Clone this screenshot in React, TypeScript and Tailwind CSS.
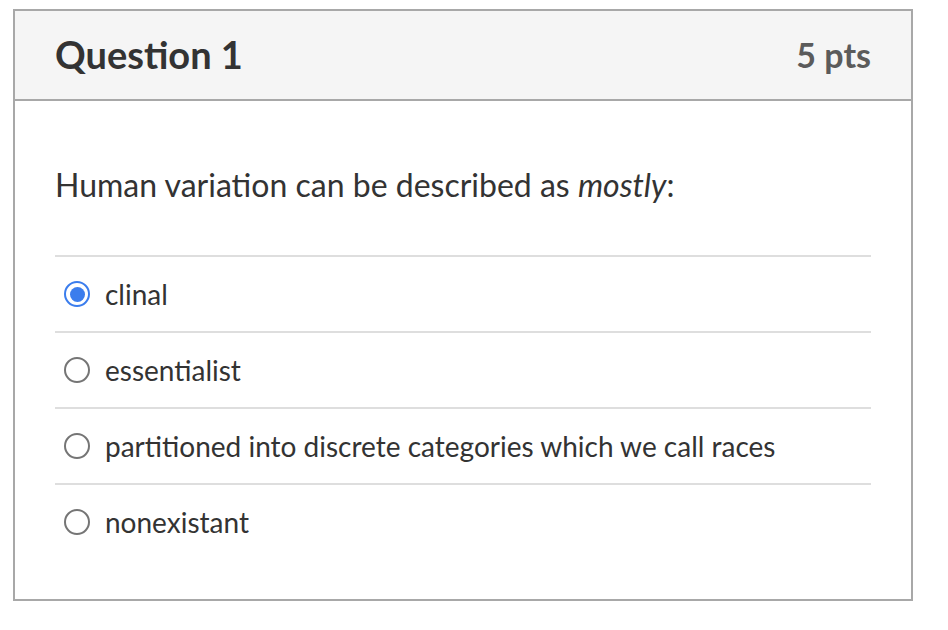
import { useState } from 'react';

const OPTIONS = [
  'clinal',
  'essentialist',
  'partitioned into discrete categories which we call races',
  'nonexistant',
];

function Radio({ checked }: { checked: boolean }) {
  if (checked) {
    return (
      <span className="flex h-[26px] w-[26px] shrink-0 items-center justify-center rounded-full border-2 border-[#3b7ded] bg-white">
        <span className="h-[15px] w-[15px] rounded-full bg-[#3b7ded]" />
      </span>
    );
  }
  return <span className="h-[26px] w-[26px] shrink-0 rounded-full border-2 border-[#757575] bg-white" />;
}

export default function App() {
  const [selected, setSelected] = useState(0);

  return (
    <div className="min-h-[630px] bg-white pl-[13px] pt-[9px] font-['Lato','Noto_Sans',sans-serif] text-[#2d3b45]">
      <div className="w-[900px] border-2 border-[#a8a8a8] bg-white">
        <header className="flex h-[90px] items-center justify-between border-b-2 border-[#a8a8a8] bg-[#f5f5f5] px-[40px] pb-[2px]">
          <h2 className="text-[38px] font-bold text-[#333333]">Question 1</h2>
          <span className="text-[34px] font-bold text-[#5b5b5b]">5 pts</span>
        </header>

        <div className="px-[40px] pb-[40px] pt-[64px]">
          <p className="text-[32px] leading-[40px] text-[#333333]">
            Human variation can be described as <em>mostly</em>:
          </p>

          <div className="mt-[50px]">
            {OPTIONS.map((opt, i) => (
              <label
                key={opt}
                className="flex h-[76px] cursor-pointer items-center gap-[15px] border-t-2 border-[#dedede] pl-[9px]"
                onClick={() => setSelected(i)}
              >
                <Radio checked={selected === i} />
                <span className="text-[28px] text-[#333333]">{opt}</span>
              </label>
            ))}
          </div>
        </div>
      </div>
    </div>
  );
}
